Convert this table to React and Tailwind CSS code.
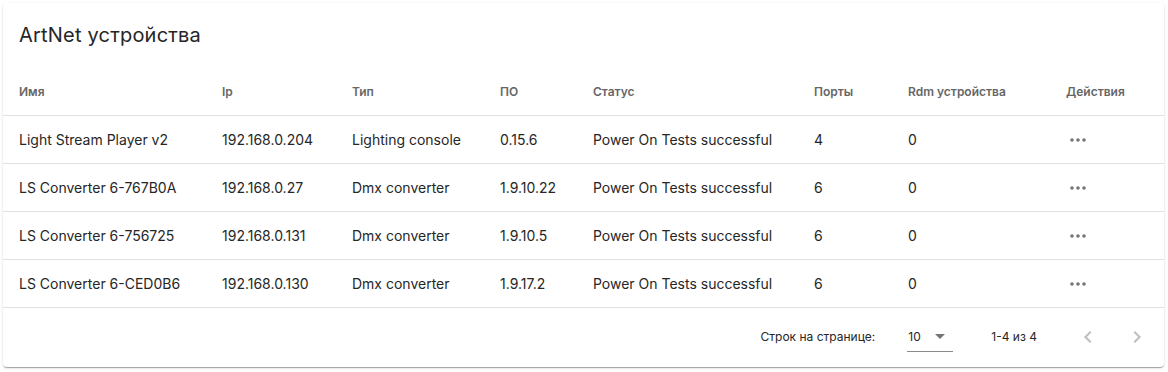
import React from 'react'

const columns = [
    { label: 'Имя', width: 203 },
    { label: 'Ip', width: 130 },
    { label: 'Тип', width: 148 },
    { label: 'ПО', width: 93 },
    { label: 'Статус', width: 221 },
    { label: 'Порты', width: 94 },
    { label: 'Rdm устройства', width: 158 },
    { label: 'Действия', width: 114 },
];

const devices = [
    { name: 'Light Stream Player v2', ip: '192.168.0.204', type: 'Lighting console', fw: '0.15.6', status: 'Power On Tests successful', ports: 4, rdm: 0 },
    { name: 'LS Converter 6-767B0A', ip: '192.168.0.27', type: 'Dmx converter', fw: '1.9.10.22', status: 'Power On Tests successful', ports: 6, rdm: 0 },
    { name: 'LS Converter 6-756725', ip: '192.168.0.131', type: 'Dmx converter', fw: '1.9.10.5', status: 'Power On Tests successful', ports: 6, rdm: 0 },
    { name: 'LS Converter 6-CED0B6', ip: '192.168.0.130', type: 'Dmx converter', fw: '1.9.17.2', status: 'Power On Tests successful', ports: 6, rdm: 0 },
];

const Dots = () => (
    <svg width="16" height="4" viewBox="0 0 16 4" className="text-[#757575]">
        <circle cx="2" cy="2" r="1.8" fill="currentColor" />
        <circle cx="8" cy="2" r="1.8" fill="currentColor" />
        <circle cx="14" cy="2" r="1.8" fill="currentColor" />
    </svg>
);

const Chevron = ({ dir }) => (
    <svg width="24" height="24" viewBox="0 0 24 24" className="text-[#bdbdbd]">
        {dir === 'left'
            ? <path d="M15.41 7.41 14 6l-6 6 6 6 1.41-1.41L10.83 12z" fill="currentColor" />
            : <path d="M10 6 8.59 7.41 13.17 12l-4.58 4.59L10 18l6-6z" fill="currentColor" />}
    </svg>
);

const App = () => {
    return (
        <div className="bg-white min-h-[372px] pt-[3px] pl-[3px] font-['Inter',sans-serif] text-[#262626]">
            <div className="w-[1161px] bg-white rounded-[4px] shadow-[0_2px_1px_-1px_rgba(0,0,0,0.2),0_1px_1px_0_rgba(0,0,0,0.14),0_1px_3px_0_rgba(0,0,0,0.12)]">
                {/* Title */}
                <div className="h-16 flex items-center px-4">
                    <h2 className="text-xl font-normal tracking-[0.2px]">ArtNet устройства</h2>
                </div>

                {/* Table */}
                <table className="table-fixed w-full border-collapse">
                    <colgroup>
                        {columns.map(c => <col key={c.label} style={{ width: c.width }} />)}
                    </colgroup>
                    <thead>
                        <tr className="h-12 border-b border-[#e0e0e0]">
                            {columns.map(c => (
                                <th key={c.label} className="px-4 pt-[2px] text-left text-xs font-semibold text-[#666666]">{c.label}</th>
                            ))}
                        </tr>
                    </thead>
                    <tbody>
                        {devices.map(d => (
                            <tr key={d.name} className="h-12 border-b border-[#e0e0e0] text-sm">
                                <td className="px-4 pt-[2px]">{d.name}</td>
                                <td className="px-4 pt-[2px]">{d.ip}</td>
                                <td className="px-4 pt-[2px]">{d.type}</td>
                                <td className="px-4 pt-[2px]">{d.fw}</td>
                                <td className="px-4 pt-[2px]">{d.status}</td>
                                <td className="px-4 pt-[2px]">{d.ports}</td>
                                <td className="px-4 pt-[2px]">{d.rdm}</td>
                                <td className="px-4 pt-[2px]"><div className="pl-[4px]"><Dots /></div></td>
                            </tr>
                        ))}
                    </tbody>
                </table>

                {/* Pagination */}
                <div className="h-[59px] flex items-center justify-end pr-[15px] text-xs">
                    <span className="mr-[32px]">Строк на странице:</span>
                    <div className="flex items-center gap-[14px] border-b border-[#8a8a8a] h-[30px] w-[46px] mr-[38px] pl-[1px]">
                        <span>10</span>
                        <svg width="10" height="5" viewBox="0 0 10 5" className="text-[#757575]">
                            <path d="M0 0h10L5 5z" fill="currentColor" />
                        </svg>
                    </div>
                    <span className="mr-[39px]">1-4 из 4</span>
                    <div className="flex items-center gap-[25px]">
                        <Chevron dir="left" />
                        <Chevron dir="right" />
                    </div>
                </div>
            </div>
        </div>
    );
};

export default App;
